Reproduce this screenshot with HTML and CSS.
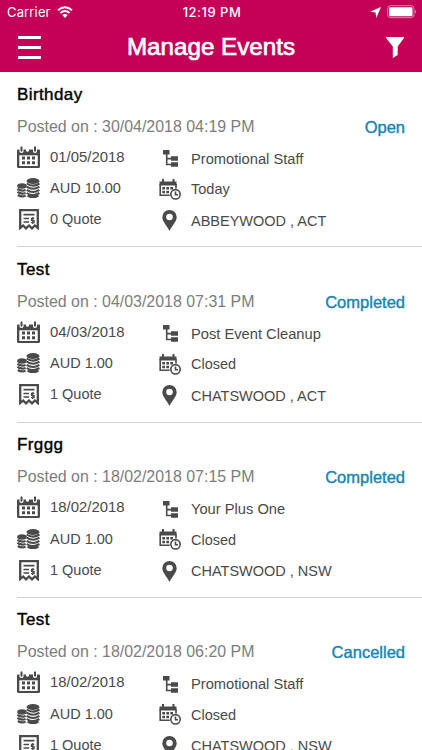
FILE: index.html
```html
<!DOCTYPE html>
<html lang="en">
  <head>
    <meta charset="UTF-8" />
    <title>Manage Events</title>
    <meta name="viewport" content="width=device-width, initial-scale=1.0" />
    <link rel="stylesheet" href="styles.css">
  </head>
  <body>
    <svg class="sprite" aria-hidden="true">
      <symbol id="calendar" viewBox="0 0 23 22">
        <path d="M0 4.500Q0 3.500 1 3.500H2.500V6q2 2 4 0V3.500H9V5q1.500 1.500 3 0V3.500h4V6q2 2 4 0V3.500h2q1 0 1 1v16q0 1.500-1.500 1.500h-20Q0 22 0 20.500z" />
        <path d="M3.500 1q1-1.500 2 0V5q-1 1.500-2 0zM17 1q1-1.500 2 0V5q-1 1.500-2 0z" />
        <path fill="#fff" d="M2.300 9.300h18.400v10.700H2.300z" />
        <path d="M5 10.500h3v3H5zm5 0h3v3h-3zm5 0h3v3h-3zM5 15.300h3v3H5zm5 0h3v3h-3zm5 0h3v3h-3z" />
      </symbol>
      <symbol id="coins" viewBox="0 0 23 20">
        <ellipse cx="16" cy="3" rx="6.500" ry="3" />
        <ellipse cx="5" cy="8" rx="4.800" ry="2.700" />
        <path class="coin" d="M9.700 5.500q6.300 4.200 12.700 0M9.700 8.700q6.300 4.200 12.700 0M9.700 11.900q6.300 4.200 12.700 0M9.700 15q6.300 4.200 12.700 0M10.500 17.700q5.500 3.300 11 0M.4 11q4 2.600 8.200 1M.4 14q4 2.600 8.200 1M.8 17q3.500 2.300 7.800 .8" />
      </symbol>
      <symbol id="receipt" viewBox="0 0 20 21">
        <path class="edge" d="M1.200 19V1.200h17.600V19l-2.900-2.500-2.900 2.800-3-2.800-3 2.800-2.900-2.800z" />
        <path d="M4.500 4.800h11v1.700h-11zM4.500 8.800h5.500v1.500H4.500zM4.500 12.300h5.500v1.500H4.500z" />
        <path class="dollar" d="M15.300 9.300h-2.800v2.200h2.600v2.200h-3M13.800 8v7" />
      </symbol>
      <symbol id="tree" viewBox="0 0 15 17">
        <path d="M0 0h6.500v4.500H0zM8 6.300h7v4.400H8zM8 12.300h7v4.400H8z" />
        <path class="line" d="M3.700 4v10.500H9M3.700 8.600H9" />
      </symbol>
      <symbol id="schedule" viewBox="0 0 22 21">
        <path d="M.5 2.500h17V6.500H.5z" />
        <path d="M3 0h2v3H3zM13.500 0h2v3h-2z" />
        <path class="edge-thin" d="M1.200 5v11.200h9.500M17 5v4.500" />
        <path d="M3.300 8h2.700v2.500H3.300zm4 0h2.700v2.500H7.300zm4 0h2.700v2.500h-2.700zM3.300 11.800h2.700v2.500H3.300zm4 0h2.700v2.500H7.300z" />
        <circle class="clock" cx="16.500" cy="15.300" r="4.700" />
        <path class="edge-thin" d="M16.500 12.500v3.200h2.500" />
      </symbol>
      <symbol id="pin" viewBox="0 0 15 21">
        <path fill-rule="evenodd" d="M7.500 0A7.200 7.200 0 0 0 .3 7.200C.3 11.500 5 15.500 7.500 21 10 15.500 14.700 11.500 14.700 7.200A7.200 7.200 0 0 0 7.500 0zm0 3.700a3.300 3.300 0 1 1 0 6.600 3.300 3.300 0 0 1 0-6.600z" />
      </symbol>
    </svg>

    <header class="header">
      <div class="status-bar">
        <div class="carrier">
          <span>Carrier</span>
          <svg class="wifi" viewBox="0 0 16 12">
            <path d="M1 4.300q7-6 14 0M3.400 7q4.600-4 9.200 0" />
            <path class="wifi-dot" d="M5.300 9.100q2.700-2.200 5.400 0L8 12z" />
          </svg>
        </div>
        <span class="time">12:19 PM</span>
        <div class="indicators">
          <svg class="location" viewBox="0 0 11 11"><path d="M11 0L6.300 11 5.500 5.500 0 4.800z" /></svg>
          <svg class="battery" viewBox="0 0 30 14">
            <rect class="battery-edge" x=".7" y=".7" width="26.300" height="12" rx="3" />
            <rect x="2.200" y="2.200" width="23.300" height="9" rx="1.300" />
            <path d="M28.200 4.700q2 2 0 4z" opacity=".6" />
          </svg>
        </div>
      </div>
      <div class="nav-bar">
        <div class="menu"><i></i><i></i><i></i></div>
        <h1>Manage Events</h1>
        <svg class="filter" viewBox="0 0 18 21"><path d="M0 0h18v1L11.700 9.500V18L6.800 21V9.500L0 1z" /></svg>
      </div>
    </header>

    <main class="events">
      <article class="event">
        <h2>Birthday</h2>
        <div class="posted"><span>Posted on : 30/04/2018 04:19 PM</span><b>Open</b></div>
        <div class="details">
          <ul class="left">
            <li><svg class="calendar"><use href="#calendar" /></svg><span class="date">01/05/2018</span></li>
            <li><svg class="coins"><use href="#coins" /></svg><span>AUD 10.00</span></li>
            <li><svg class="receipt"><use href="#receipt" /></svg><span>0 Quote</span></li>
          </ul>
          <ul class="right">
            <li><svg class="tree"><use href="#tree" /></svg><span>Promotional Staff</span></li>
            <li><svg class="schedule"><use href="#schedule" /></svg><span>Today</span></li>
            <li><svg class="pin"><use href="#pin" /></svg><span>ABBEYWOOD , ACT</span></li>
          </ul>
        </div>
      </article>

      <article class="event">
        <h2>Test</h2>
        <div class="posted"><span>Posted on : 04/03/2018 07:31 PM</span><b>Completed</b></div>
        <div class="details">
          <ul class="left">
            <li><svg class="calendar"><use href="#calendar" /></svg><span class="date">04/03/2018</span></li>
            <li><svg class="coins"><use href="#coins" /></svg><span>AUD 1.00</span></li>
            <li><svg class="receipt"><use href="#receipt" /></svg><span>1 Quote</span></li>
          </ul>
          <ul class="right">
            <li><svg class="tree"><use href="#tree" /></svg><span>Post Event Cleanup</span></li>
            <li><svg class="schedule"><use href="#schedule" /></svg><span>Closed</span></li>
            <li><svg class="pin"><use href="#pin" /></svg><span>CHATSWOOD , ACT</span></li>
          </ul>
        </div>
      </article>

      <article class="event">
        <h2>Frggg</h2>
        <div class="posted"><span>Posted on : 18/02/2018 07:15 PM</span><b>Completed</b></div>
        <div class="details">
          <ul class="left">
            <li><svg class="calendar"><use href="#calendar" /></svg><span class="date">18/02/2018</span></li>
            <li><svg class="coins"><use href="#coins" /></svg><span>AUD 1.00</span></li>
            <li><svg class="receipt"><use href="#receipt" /></svg><span>1 Quote</span></li>
          </ul>
          <ul class="right">
            <li><svg class="tree"><use href="#tree" /></svg><span>Your Plus One</span></li>
            <li><svg class="schedule"><use href="#schedule" /></svg><span>Closed</span></li>
            <li><svg class="pin"><use href="#pin" /></svg><span>CHATSWOOD , NSW</span></li>
          </ul>
        </div>
      </article>

      <article class="event">
        <h2>Test</h2>
        <div class="posted"><span>Posted on : 18/02/2018 06:20 PM</span><b>Cancelled</b></div>
        <div class="details">
          <ul class="left">
            <li><svg class="calendar"><use href="#calendar" /></svg><span class="date">18/02/2018</span></li>
            <li><svg class="coins"><use href="#coins" /></svg><span>AUD 1.00</span></li>
            <li><svg class="receipt"><use href="#receipt" /></svg><span>1 Quote</span></li>
          </ul>
          <ul class="right">
            <li><svg class="tree"><use href="#tree" /></svg><span>Promotional Staff</span></li>
            <li><svg class="schedule"><use href="#schedule" /></svg><span>Closed</span></li>
            <li><svg class="pin"><use href="#pin" /></svg><span>CHATSWOOD , NSW</span></li>
          </ul>
        </div>
      </article>
    </main>
  </body>
</html>
```
FILE: styles.css
```css
* {
  box-sizing: border-box;
}

body {
  margin: 0;
  height: 100vh;
  overflow: hidden;
  background: #fff;
  color: #4a4a4a;
  font-family: 'Liberation Sans', Arial, sans-serif;
}

h1,
h2,
ul {
  margin: 0;
  padding: 0;
}

ul {
  list-style: none;
}

svg {
  flex: none;
  fill: currentColor;
}

.sprite {
  display: none;
}

.header {
  height: 72px;
  background: #c40057;
  color: #fff;
}

.status-bar {
  display: grid;
  grid-template-columns: 1fr auto 1fr;
  align-items: center;
  height: 24px;
  padding: 0 7px;
  font-family: Inter, sans-serif;
  font-size: 13px;
}

.carrier {
  display: flex;
  align-items: center;
  gap: 6px;
  letter-spacing: 0.15px;
}

.wifi {
  width: 16px;
  height: 12px;
}

.wifi path {
  fill: none;
  stroke: #fff;
  stroke-width: 2;
}

.wifi .wifi-dot {
  fill: #fff;
  stroke: none;
}

.time {
  padding-left: 2px;
  font-weight: 500;
  letter-spacing: 0.5px;
}

.indicators {
  display: flex;
  align-items: center;
  justify-content: flex-end;
  gap: 6px;
  margin-right: -2px;
}

.location {
  width: 11px;
  height: 11px;
}

.battery {
  width: 30px;
  height: 14px;
}

.battery-edge {
  fill: none;
  stroke: #fff;
  opacity: 0.5;
}

.nav-bar {
  display: grid;
  grid-template-columns: 1fr auto 1fr;
  align-items: center;
  height: 46px;
  padding: 0 18px;
}

.menu {
  display: grid;
  gap: 7px;
  width: 23px;
  margin-top: 1px;
}

.menu i {
  height: 3px;
  background: #fff;
}

h1 {
  font-size: 24.2px;
  font-weight: 400;
  line-height: 28px;
  -webkit-text-stroke: 0.7px #fff;
}

.filter {
  justify-self: end;
  width: 18px;
  height: 21px;
}

.event {
  height: 175.33px;
  margin-left: 17px;
  padding: 12.5px 17px 0 0;
  border-bottom: 1px solid #d2d2d2;
}

h2 {
  color: #000;
  font-size: 17px;
  font-weight: 400;
  letter-spacing: 0.4px;
  line-height: 20px;
  -webkit-text-stroke: 0.4px #000;
}

.posted {
  display: flex;
  justify-content: space-between;
  margin-top: 12px;
  color: #7d7d7d;
  font-size: 15.95px;
  line-height: 20px;
}

.posted b {
  color: #1585b5;
  font-size: 16.5px;
  font-weight: 400;
  -webkit-text-stroke: 0.4px #1585b5;
}

.details {
  display: grid;
  grid-template-columns: 142px 1fr;
  margin-top: 4.5px;
  font-size: 14.5px;
}

.details li {
  display: grid;
  align-items: center;
  height: 31px;
}

.left li {
  grid-template-columns: 33px 1fr;
}

.left li:nth-child(2) {
  height: 32px;
}

.left li:last-child {
  height: 30px;
}

.right {
  padding-top: 2px;
}

.right li {
  grid-template-columns: 32px 1fr;
}

.right li:nth-child(2) {
  height: 30px;
}

.right li:last-child {
  height: 33px;
}

.right li:first-child span {
  font-size: 14.7px;
}

.date {
  font-size: 14.9px;
}

.line,
.coin,
.dollar,
.edge,
.edge-thin,
.clock {
  fill: none;
  stroke: currentColor;
  stroke-width: 1.6;
}

.coin {
  stroke-width: 2.1;
}

.dollar {
  stroke-width: 1.2;
}

.edge {
  stroke-width: 2.3;
}

.clock {
  fill: #fff;
}

.calendar {
  width: 23px;
  height: 22px;
}

.coins {
  width: 23px;
  height: 20px;
}

.receipt {
  width: 20px;
  height: 21px;
  margin: 1px 0 0 2px;
}

.tree {
  width: 15px;
  height: 17px;
  margin-left: 4px;
}

.schedule {
  width: 22px;
  height: 21px;
}

.pin {
  width: 15px;
  height: 21px;
  margin-left: 3px;
}
```
